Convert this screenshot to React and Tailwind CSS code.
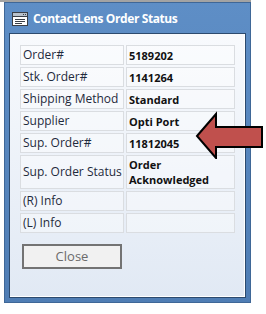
import React from "react";

const rows = [
  { label: "Order#", value: "5189202" },
  { label: "Stk. Order#", value: "1141264" },
  { label: "Shipping Method", value: "Standard" },
  { label: "Supplier", value: "Opti Port" },
  { label: "Sup. Order#", value: "11812045" },
  { label: "Sup. Order Status", value: "Order Acknowledged", tall: true },
  { label: "(R) Info", value: "" },
  { label: "(L) Info", value: "" },
];

const WindowIcon = () => (
  <svg width="16" height="16" viewBox="0 0 16 16" className="shrink-0">
    <rect x="0.5" y="1.5" width="15" height="13" fill="#ffffff" stroke="#3a3f47" />
    <rect x="1" y="2" width="14" height="3" fill="#b9c2cc" />
    <line x1="1" y1="5.5" x2="15" y2="5.5" stroke="#3a3f47" />
    <rect x="11" y="3" width="1" height="1" fill="#3a3f47" />
    <rect x="13" y="3" width="1" height="1" fill="#3a3f47" />
    <line x1="3" y1="8.5" x2="13" y2="8.5" stroke="#3a3f47" />
    <line x1="3" y1="10.5" x2="13" y2="10.5" stroke="#3a3f47" />
    <line x1="3" y1="12.5" x2="10" y2="12.5" stroke="#3a3f47" />
  </svg>
);

const Arrow = () => (
  <svg width="70" height="48" viewBox="0 0 70 48" className="absolute left-[195px] top-[111px]">
    <polygon
      points="2,25 21,3 21,16 67,16 67,36 21,36 21,47"
      fill="#c0504d"
      stroke="#000000"
      strokeWidth="2"
      strokeLinejoin="miter"
    />
  </svg>
);

export default function App() {
  return (
    <div className="relative w-[266px] h-[314px] bg-white overflow-hidden">
      <div className="h-[2px] w-[251px] bg-[#a3a3a3]" />
      <div className="ml-[4px] w-[247px] h-[301px] flex flex-col bg-gradient-to-b from-[#5e8ec6] to-[#4f7db4] border border-[#3f6797]">
        {/* title bar */}
        <div className="h-[30px] flex items-center gap-[5px] pl-[7px] pt-[1px]">
          <WindowIcon />
          <span className="text-white font-bold text-[12px] font-['Open_Sans',sans-serif] tracking-[-0.4px]">
            ContactLens Order Status
          </span>
        </div>
        {/* content */}
        <div className="mx-[4px] mb-[4px] flex-1 border border-[#2c4a6e] bg-gradient-to-b from-[#f8fafd] to-[#e1e9f4] shadow-[inset_0_-1px_0_#ffffff,inset_-1px_0_0_#ffffff]">
          <div className="mt-[11px] ml-[10px] w-[215px] flex flex-col gap-[2px] font-['Open_Sans',sans-serif]">
            {rows.map((r) => (
              <div key={r.label} className="flex gap-[2px]">
                <div
                  className={`w-[104px] border border-[#dadde1] bg-white/40 text-[12px] text-[#1f2a3c] pl-[2px] flex items-center ${r.tall ? "h-[34px]" : "h-[20px]"}`}
                >
                  {r.label}
                </div>
                <div
                  className={`w-[109px] border border-[#dadde1] bg-white/40 text-[11px] font-bold text-[#111] pl-[2px] flex items-center leading-[15px] ${r.tall ? "h-[34px]" : "h-[20px]"}`}
                >
                  {r.value}
                </div>
              </div>
            ))}
          </div>
          <button className="mt-[11px] ml-[12px] w-[100px] h-[25px] border-2 border-[#737373] bg-[#f1f1f1] text-[13px] text-[#6b6b6b] font-['Open_Sans',sans-serif] flex items-center justify-center">
            Close
          </button>
        </div>
      </div>
      <Arrow />
    </div>
  );
}
